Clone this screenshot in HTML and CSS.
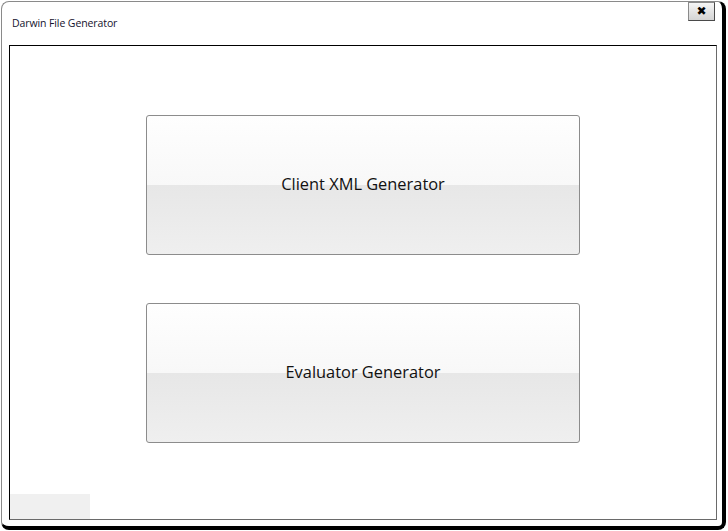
FILE: index.html
```html
<!DOCTYPE html>
<html>
<head>
<meta charset="utf-8">
<link rel="stylesheet" href="styles.css">
</head>
<body>
<div class="window">
  <div class="titlebar">
    <span class="title">Darwin File Generator</span>
    <button class="close" type="button">✖</button>
  </div>
  <div class="panel">
    <div class="buttons">
      <button class="big-btn" type="button">Client XML Generator</button>
      <button class="big-btn" type="button">Evaluator Generator</button>
    </div>
    <div class="status"></div>
  </div>
</div>
</body>
</html>
```
FILE: styles.css
```css
html, body {
  margin: 0;
  padding: 0;
  background: #ffffff;
}
body {
  padding: 1px 0 0 1px;
  font-family: "Open Sans", "DejaVu Sans", sans-serif;
}
.window {
  box-sizing: border-box;
  width: 725px;
  height: 529px;
  background: #ffffff;
  border-top: 1px solid #8a8a8a;
  border-left: 1px solid #8a8a8a;
  border-right: 4px solid #000000;
  border-bottom: 4px solid #000000;
  border-radius: 8px;
  display: flex;
  flex-direction: column;
}
.titlebar {
  height: 43px;
  display: flex;
  align-items: flex-start;
  justify-content: space-between;
}
.title {
  margin: 14px 0 0 10px;
  font-size: 10.5px;
  letter-spacing: -0.1px;
  color: #14122e;
  line-height: 15px;
}
.close {
  margin: 0 7px 0 0;
  width: 27px;
  height: 19px;
  padding: 0;
  border: 1px solid #4a4a4a;
  border-top-color: #8a8a8a;
  border-left-color: #8a8a8a;
  background: linear-gradient(#f6f6f6, #e4e4e4 50%, #d4d4d4);
  font-size: 12px;
  font-weight: bold;
  color: #000;
  line-height: 17px;
  font-family: "DejaVu Sans", sans-serif;
}
.panel {
  flex: 1;
  margin: 0 5px 6px 7px;
  border-top: 1px solid #000;
  border-left: 1px solid #000;
  border-right: 1px solid #6a6a6a;
  border-bottom: 1px solid #6a6a6a;
  display: flex;
  flex-direction: column;
}
.buttons {
  margin-top: 69px;
  display: flex;
  flex-direction: column;
  align-items: center;
  gap: 48px;
}
.big-btn {
  box-sizing: border-box;
  width: 434px;
  height: 140px;
  border: 1px solid #8c8c8c;
  border-radius: 3px;
  background: linear-gradient(#fefefe, #f8f8f8 50%, #e7e7e7 50%, #efefef);
  font-family: "Open Sans", "DejaVu Sans", sans-serif;
  font-size: 16.4px;
  color: #111;
  padding: 0 0 4px 0;
}
.status {
  margin-top: auto;
  width: 80px;
  height: 25px;
  background: #f0f0f0;
}
```
